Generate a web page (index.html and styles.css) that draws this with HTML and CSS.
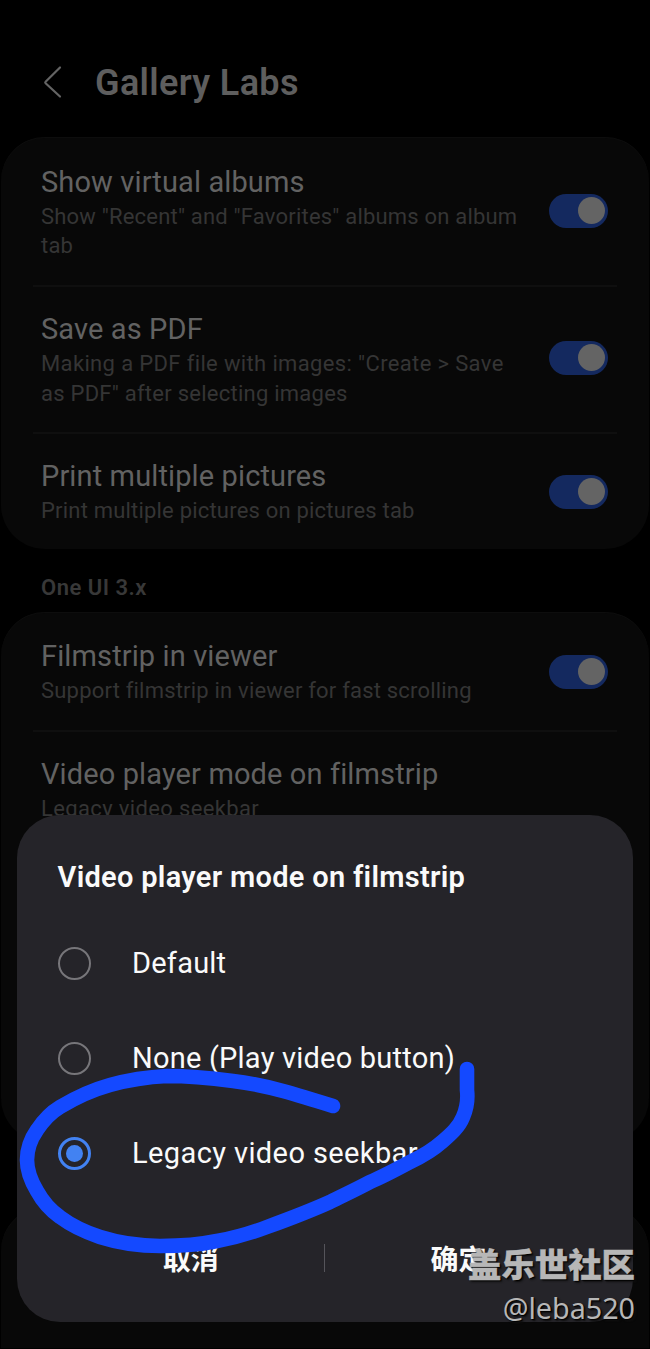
FILE: index.html
```
<!DOCTYPE html>
<html lang="en">
<head>
<meta charset="utf-8">
<title>Gallery Labs</title>
<link rel="stylesheet" href="styles.css">
</head>
<body>
<div class="screen">
  <header class="header">
    <svg class="back" width="20" height="34" viewBox="0 0 20 34" fill="none" stroke="#646464" stroke-width="2.2" stroke-linecap="round" stroke-linejoin="round"><path d="M17 2.5 2.6 16.8Q1.9 17.5 2.6 18.2L17 31.5"/></svg>
    <h1 class="title">Gallery Labs</h1>
  </header>
  <section class="card">
    <div class="row tall">
      <div class="text"><div class="name">Show virtual albums</div><div class="desc">Show "Recent" and "Favorites" albums on album<br>tab</div></div>
      <span class="switch"></span>
    </div>
    <div class="row tall">
      <div class="text"><div class="name">Save as PDF</div><div class="desc wide">Making a PDF file with images: "Create &gt; Save<br><span class="snug">as PDF" after selecting images</span></div></div>
      <span class="switch"></span>
    </div>
    <div class="row">
      <div class="text"><div class="name">Print multiple pictures</div><div class="desc">Print multiple pictures on pictures tab</div></div>
      <span class="switch"></span>
    </div>
  </section>
  <h2 class="section">One UI 3.x</h2>
  <section class="card second">
    <div class="row">
      <div class="text"><div class="name">Filmstrip in viewer</div><div class="desc">Support filmstrip in viewer for fast scrolling</div></div>
      <span class="switch"></span>
    </div>
    <div class="row">
      <div class="text"><div class="name">Video player mode on filmstrip</div><div class="desc wide">Legacy video seekbar</div></div>
    </div>
  </section>
  <section class="card last"></section>

  <div class="dialog">
    <h2 class="dialog-title">Video player mode on filmstrip</h2>
    <div class="option"><span class="radio"></span><span>Default</span></div>
    <div class="option"><span class="radio"></span><span>None (Play video button)</span></div>
    <div class="option legacy"><span class="radio checked"></span><span>Legacy video seekbar</span></div>
    <div class="actions"><span class="button">取消</span><span class="split"></span><span class="button">确定</span></div>
  </div>

  <svg class="marker" width="650" height="1349" viewBox="0 0 650 1349" fill="none" stroke="#1449ff" stroke-width="14.6" stroke-linecap="round" stroke-linejoin="round">
    <path d="M333 1106C317 1101 301 1096 283 1091C265 1086 250 1083 233 1081C210 1078 188 1076 167 1076C147 1077 128 1080 110 1085C92 1090 75 1098 60 1107C50 1113 43 1121 37 1130C30 1140 27 1149 27 1160C27 1171 31 1181 37 1191C43 1202 50 1210 60 1217C72 1226 85 1232 100 1237C119 1243 140 1246 160 1246C180 1246 198 1245 217 1241C234 1238 251 1233 267 1227C289 1219 310 1211 330 1202C344 1195 357 1189 370 1182C384 1176 397 1169 410 1162C423 1156 434 1149 443 1141C451 1134 459 1127 463 1117C467 1108 468 1099 467 1090C467 1083 467 1077 467 1069"/>
  </svg>

  <div class="watermark"><div class="site">盖乐世社区</div><div class="user">@leba520</div></div>
</div>
</body>
</html>
```

FILE: styles.css
```
* { box-sizing: border-box; }

body {
  margin: 0;
  background: #000;
  font-family: Roboto, "Noto Sans CJK SC", sans-serif;
}

.screen {
  position: relative;
  width: 650px;
  height: 1349px;
  overflow: hidden;
  background: #000;
}

.header {
  display: flex;
  align-items: center;
  height: 137px;
  padding: 27px 0 0 43px;
}

.title {
  margin: 2px 0 0 32px;
  font-size: 36px;
  font-weight: 600;
  letter-spacing: 0.35px;
  color: #5e5e5e;
}

.card {
  height: 412px;
  margin: 0 1px;
  padding: 0 32px;
  border-radius: 44px;
  background: #080808;
  box-shadow: inset 0 1px #0d0d0d;
}

.second { height: 530px; }
.last { height: 141px; margin-top: 65px; border-radius: 44px 44px 0 0; }

.row {
  display: flex;
  align-items: center;
  justify-content: space-between;
  height: 118px;
  padding: 2px 9px 0 8px;
}

.tall { height: 147.5px; padding-top: 1px; }
.tall .text { padding-top: 2px; }

.row + .row { box-shadow: inset 0 2px #0f0f0f; }

.name {
  height: 38px;
  font-size: 29px;
  line-height: 37px;
  letter-spacing: 0.12px;
  color: #626262;
  white-space: nowrap;
}

.desc {
  font-size: 22px;
  line-height: 29.5px;
  letter-spacing: 0.2px;
  color: #353535;
  white-space: nowrap;
}

.wide { letter-spacing: 0.36px; }
.snug { letter-spacing: 0.25px; }

.switch {
  width: 59px;
  height: 34px;
  padding: 3px;
  margin-bottom: 1px;
  border-radius: 17px;
  background: #14295f;
}

.switch::after {
  content: "";
  display: block;
  width: 27px;
  height: 27px;
  margin-left: 26px;
  border-radius: 50%;
  background: #646464;
}

.section {
  height: 63px;
  margin: 0;
  padding-left: 41px;
  font-size: 22px;
  font-weight: 600;
  line-height: 78px;
  letter-spacing: 0.5px;
  color: #383838;
}

.dialog {
  position: absolute;
  left: 17px;
  top: 815px;
  width: 616px;
  height: 507px;
  padding: 38px 41px 0 40.5px;
  border-radius: 43px;
  background: #252429;
  color: #fafafa;
}

.dialog-title {
  height: 62.5px;
  margin: 0;
  font-size: 29px;
  font-weight: 600;
  line-height: 48px;
  letter-spacing: 0.3px;
}

.option {
  display: flex;
  align-items: center;
  gap: 41.5px;
  height: 95px;
  font-size: 29px;
  letter-spacing: 0.22px;
}

.legacy { letter-spacing: 0.4px; }

.radio {
  display: flex;
  align-items: center;
  justify-content: center;
  width: 33px;
  height: 33px;
  border: 2px solid #77767a;
  border-radius: 50%;
}

.checked { border: 3px solid #4282f2; }

.checked::after {
  content: "";
  width: 17px;
  height: 17px;
  border-radius: 50%;
  background: #4282f2;
}

.actions {
  display: flex;
  align-items: center;
  height: 58px;
  margin-top: 28px;
}

.button {
  flex: 1;
  text-align: center;
  font-size: 28px;
  font-weight: 600;
}

.split {
  width: 1px;
  height: 28px;
  background: #55545a;
}

.marker {
  position: absolute;
  left: 0;
  top: 0;
}

.watermark {
  position: absolute;
  right: 15px;
  top: 1239px;
  text-align: right;
  color: #b7b7b7;
  text-shadow: 1px 1px 1px #000, 2px 2px 2px #111;
}

.site {
  font: 900 33.4px/47px "Noto Sans CJK SC", sans-serif;
  -webkit-text-stroke: 0.4px #b7b7b7;
}

.user {
  font: 400 28.7px/43px "Noto Sans", sans-serif;
}
```
